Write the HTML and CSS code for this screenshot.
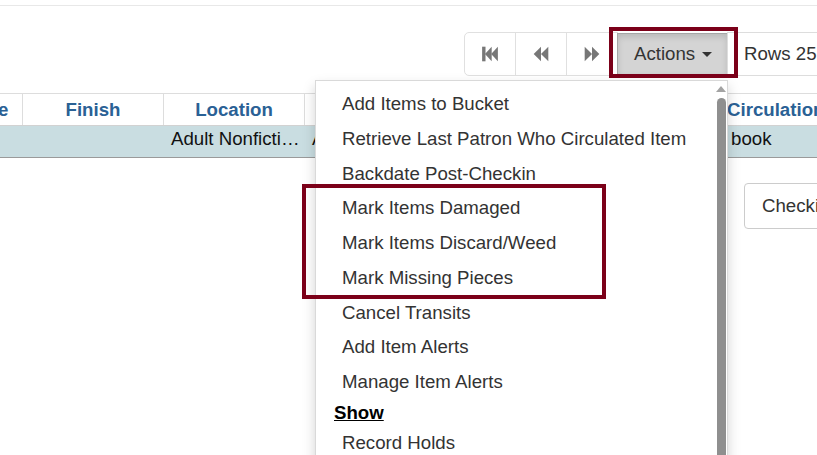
FILE: index.html
```html
<!DOCTYPE html>
<html>
<head>
<meta charset="utf-8">
<link rel="stylesheet" href="styles.css">
</head>
<body>
<div class="topbar"></div>
<div class="toolbar">
  <div class="btn-group">
    <button class="btn btn-icon first" type="button">
      <svg width="18" height="18" viewBox="0 0 16 16"><rect x="1" y="1.5" width="3" height="13" fill="#777"/><polygon points="3.5,8 9.5,1.5 9.5,14.5" fill="#777"/><polygon points="9,8 15,1.5 15,14.5" fill="#777"/></svg>
    </button>
    <button class="btn btn-icon" type="button">
      <svg width="18" height="18" viewBox="0 0 16 16"><polygon points="1.5,8 8,1.5 8,14.5" fill="#777"/><polygon points="8,8 14.5,1.5 14.5,14.5" fill="#777"/></svg>
    </button>
    <button class="btn btn-icon" type="button">
      <svg width="18" height="18" viewBox="0 0 16 16"><polygon points="1.5,1.5 8,8 1.5,14.5" fill="#777"/><polygon points="8,1.5 14.5,8 8,14.5" fill="#777"/></svg>
    </button>
    <button class="btn btn-actions" type="button">Actions <span class="caret"></span></button>
    <button class="btn btn-rows" type="button">Rows 25 <span class="caret"></span></button>
  </div>
</div>

<div class="grid">
  <div class="hcell c0">e</div>
  <div class="hcell">Finish</div>
  <div class="hcell">Location</div>
  <div class="hcell"></div>
  <div class="hcell"></div>
  <div class="hcell"></div>
  <div class="hcell last">Circulation</div>
  <div class="dcell c0"></div>
  <div class="dcell"></div>
  <div class="dcell">Adult Nonfiction Collection</div>
  <div class="dcell">Adult</div>
  <div class="dcell"></div>
  <div class="dcell"></div>
  <div class="dcell last">book</div>
</div>

<div class="checkin-row">
  <button class="btn-checkin" type="button">Checkin</button>
</div>

<div class="menu">
  <ul class="menu-list">
    <li class="item">Add Items to Bucket</li>
    <li class="item">Retrieve Last Patron Who Circulated Item</li>
    <li class="item">Backdate Post-Checkin</li>
    <li class="item">Mark Items Damaged</li>
    <li class="item">Mark Items Discard/Weed</li>
    <li class="item">Mark Missing Pieces</li>
    <li class="item">Cancel Transits</li>
    <li class="item">Add Item Alerts</li>
    <li class="item">Manage Item Alerts</li>
    <li class="header">Show</li>
    <li class="item">Record Holds</li>
    <li class="item">Item Details</li>
  </ul>
  <div class="scroll">
    <div class="arrow"></div>
    <div class="thumb"></div>
  </div>
</div>

<div class="mark mark-actions"></div>
<div class="mark mark-items"></div>
</body>
</html>
```

FILE: styles.css
```css
html, body {
  margin: 0;
  padding: 0;
}
body {
  width: 817px;
  height: 455px;
  overflow: hidden;
  position: relative;
  background: #fff;
  font-family: "Liberation Sans", Arial, sans-serif;
  font-size: 18.67px;
  color: #333;
}
.topbar {
  height: 5px;
  border-bottom: 1px solid #e8e8e8;
}
.toolbar {
  display: flex;
  padding-left: 464px;
  margin-top: 26px;
  white-space: nowrap;
}
.btn-group {
  display: flex;
  height: 44px;
}
.btn {
  font-family: inherit;
  font-size: 18.67px;
  color: #333;
  background: #fff;
  border: 1px solid #ccc;
  margin: 0 0 0 -1px;
  height: 44px;
  line-height: 26px;
  padding: 0 16px;
  display: flex;
  align-items: center;
  white-space: nowrap;
}
.btn.first {
  margin-left: 0;
  border-radius: 5px 0 0 5px;
}
.btn-icon {
  width: 52px;
  justify-content: center;
  padding: 0;
  border-color: #e0e0e0;
}
.btn-actions {
  width: 111px;
  background: #d4d4d4;
  border-color: #a6a6a6;
  box-shadow: inset 0 3px 6px rgba(0,0,0,.125);
  height: 42px;
  margin-top: 1px;
}
.btn-rows {
  border-color: #ddd;
  padding-left: 16px;
}
.caret {
  display: inline-block;
  width: 0;
  height: 0;
  margin-left: 7px;
  border-top: 5px solid #333;
  border-left: 5px solid transparent;
  border-right: 5px solid transparent;
}
.grid {
  margin-top: 17px;
  display: grid;
  grid-template-columns: 22px 141px 141px 141px 141px 137px 200px;
  width: 923px;
}
.hcell {
  height: 31px;
  line-height: 31px;
  border-top: 1px solid #ddd;
  border-left: 1px solid #ddd;
  font-weight: bold;
  color: #2a6195;
  text-align: center;
  white-space: nowrap;
  overflow: hidden;
}
.hcell.c0 {
  border-left: none;
  text-align: left;
  text-indent: -2px;
}
.hcell.last {
  text-align: left;
  padding-left: 3px;
}
.dcell {
  height: 31px;
  line-height: 25px;
  box-sizing: content-box;
  background: #c9dde1;
  border-top: 1px solid #d2d2d2;
  border-bottom: 1px solid #9a9a9a;
  color: #111;
  padding: 0 4px 0 8px;
  white-space: nowrap;
  overflow: hidden;
  text-overflow: ellipsis;
}
.dcell.last {
  padding-left: 8px;
}
.checkin-row {
  margin-top: 25px;
  padding-left: 744px;
  white-space: nowrap;
}
.btn-checkin {
  font-family: inherit;
  font-size: 18.67px;
  color: #333;
  background: #fff;
  border: 1px solid #ccc;
  border-radius: 4px;
  height: 46px;
  padding: 0 17px;
  width: 110px;
  text-align: left;
}
.menu {
  position: absolute;
  left: 315px;
  top: 80px;
  width: 411px;
  height: 400px;
  background: #fff;
  border: 1px solid rgba(0,0,0,.15);
  box-shadow: 0 6px 12px rgba(0,0,0,.175);
  display: flex;
}
.menu-list {
  list-style: none;
  margin: 0;
  padding: 6px 0 0 0;
  flex: 1;
}
.item {
  line-height: 26.75px;
  padding: 4px 0 4px 26px;
  color: #333;
  white-space: nowrap;
}
.header {
  line-height: 26px;
  padding: 0 0 0 18px;
  font-weight: bold;
  color: #000;
  text-decoration: underline;
}
.scroll {
  width: 12px;
  display: flex;
  flex-direction: column;
  align-items: center;
}
.arrow {
  margin-top: 5px;
  width: 0;
  height: 0;
  border-bottom: 6px solid #a3a3a3;
  border-left: 5px solid transparent;
  border-right: 5px solid transparent;
}
.thumb {
  margin-top: 6px;
  width: 9px;
  flex: 1;
  background: #8f8f8f;
  border-radius: 5px 5px 0 0;
}
.mark {
  position: absolute;
  border: 4px solid #7b0019;
  box-sizing: border-box;
}
.mark-actions {
  left: 609px;
  top: 27px;
  width: 129px;
  height: 51px;
}
.mark-items {
  left: 302px;
  top: 184px;
  width: 304px;
  height: 115px;
}
```
